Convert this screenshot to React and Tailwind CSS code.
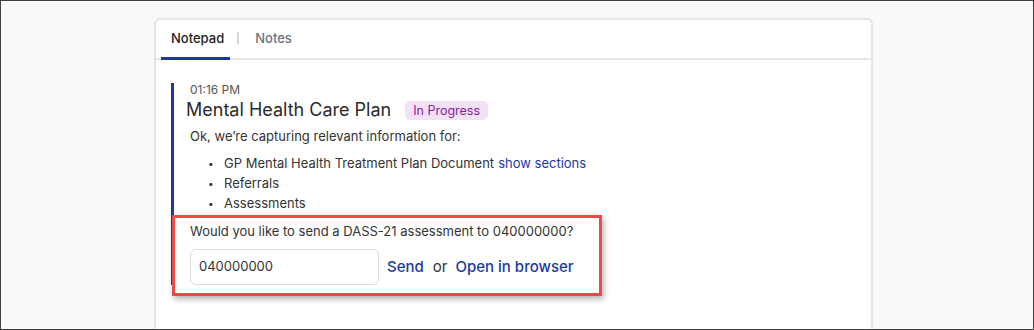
import React from "react";

const App = () => {
  return (
    <div
      className="h-[330px] w-[1034px] border border-[#404040] bg-[#f9f9f9] overflow-hidden"
      style={{ fontFamily: "Inter, 'Noto Sans', sans-serif" }}
    >
      {/* card */}
      <div className="relative ml-[153px] mt-[17px] w-[719px] h-[330px] bg-white border-2 border-b-0 border-[#e4e4ea] rounded-t-md">
        {/* tabs */}
        <div className="flex items-end h-[40px] border-b-2 border-[#e4e4ea] pl-[5px]">
          <div className="flex items-center h-full pl-[10px] pr-[6px] border-b-[3px] border-[#1c3a9e] -mb-[2px] pb-[2px] text-[13px] font-medium text-[#222]">
            Notepad
          </div>
          <div className="self-center w-[2px] h-[12px] bg-[#d6d6dc] ml-[7px] mr-[7px] -mt-[2px]" />
          <div className="flex items-center h-full pl-[9px] pr-[7px] pb-[1px] text-[13px] font-medium text-[#6b7280]">
            Notes
          </div>
        </div>

        {/* note body */}
        <div className="pl-[15px] pt-[23px]">
          <div className="border-l-[3px] border-[#1c3a9e] pl-[14px]">
            <div className="pl-[2px] text-[12px] leading-[14px] text-[#555]">01:16 PM</div>
            <div className="flex items-center gap-[14px] -ml-[2px] mt-[1px]">
              <span className="text-[18px] leading-[24px] text-[#2a2a2a]">Mental Health Care Plan</span>
              <span className="rounded-[5px] bg-[#f3e1f6] px-[8px] py-[1px] text-[12.5px] leading-[17px] text-[#8a1c9d]">
                In Progress
              </span>
            </div>
            <div className="pl-[2px] mt-[5px] text-[13px] leading-[18px] text-[#333]">
              Ok, we’re capturing relevant information for:
            </div>
            <ul className="mt-[8px] pl-[20px] text-[13px] leading-[20px] text-[#333]">
              <li className="flex items-center">
                <span className="w-[16px] text-[10px]">•</span>
                <span>GP Mental Health Treatment Plan Document</span>
                <span className="ml-[4px] text-[#1c3a9e]">show sections</span>
              </li>
              <li className="flex items-center">
                <span className="w-[16px] text-[10px]">•</span>
                <span>Referrals</span>
              </li>
              <li className="flex items-center">
                <span className="w-[16px] text-[10px]">•</span>
                <span>Assessments</span>
              </li>
            </ul>
            <div className="pl-[2px] mt-[9px] text-[13px] leading-[18px] text-[#333]">
              Would you like to send a DASS-21 assessment to 040000000?
            </div>
            <div className="flex items-center mt-[9px] pl-[2px]">
              <div className="flex items-center w-[189px] h-[36px] rounded-[6px] border border-[#d9d9de] px-[8px] text-[13px] text-[#333]">
                040000000
              </div>
              <span className="ml-[8px] text-[15px] font-medium text-[#1c3a9e]">Send</span>
              <span className="ml-[9px] text-[15px] text-[#333]">or</span>
              <span className="ml-[8px] text-[15px] font-medium text-[#1c3a9e]">Open in browser</span>
            </div>
          </div>
        </div>

        {/* annotation box */}
        <div className="absolute left-[16px] top-[195px] w-[430px] h-[81px] border-[3px] border-[#ef4848] shadow-[2px_3px_6px_rgba(0,0,0,0.3)]" />
      </div>
    </div>
  );
};

export default App;
